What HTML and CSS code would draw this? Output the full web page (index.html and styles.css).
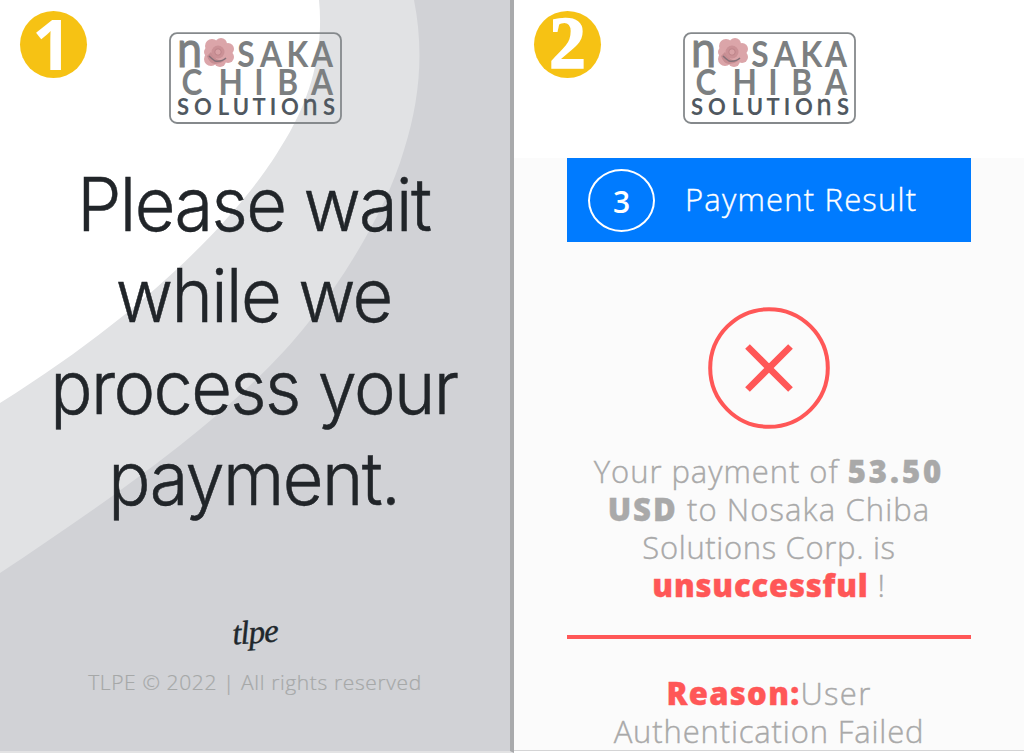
FILE: index.html
```html
<!DOCTYPE html>
<html lang="en">
<head>
  <meta charset="UTF-8">
  <title>Payment Result</title>
  <link rel="stylesheet" href="styles.css">
</head>
<body>
  <div class="screens">
    <section class="screen wait">
      <svg class="swoosh" viewBox="0 0 510 750">
        <path fill="#e1e2e4" d="M0 0H414C424 50 420 100 404 150C388 205 350 270 308 323C240 410 110 500 0 573Z"/>
        <path fill="#fff" d="M0 0H319C323 40 317 92 279 150C249 200 165 300 0 403Z"/>
      </svg>
      <div class="badge one">1</div>
      <svg class="logo" viewBox="0 0 173 92">
        <rect x="1" y="1.2" width="171" height="89.8" rx="7" fill="none" stroke="#85898c" stroke-width="1.8"/>
        <g class="logo-big" text-anchor="middle">
          <text class="logo-n" transform="translate(20.5 34.5) scale(.9 1)">n</text>
          <text transform="scale(.88 1)" y="34.5" x="87.5 115.9 146 174">SAKA</text>
          <text transform="scale(.88 1)" y="63" x="26 70 102.3 135 174">CHIBA</text>
        </g>
        <g class="logo-small" text-anchor="middle">
          <text y="82.7" x="14 34 54.5 72 90 104 121">SOLUTIO</text>
          <text class="logo-n2" transform="translate(141 82.7) scale(.9 1)">n</text>
          <text x="160" y="82.7">S</text>
        </g>
        <g fill="#dba5a9">
          <circle cx="43" cy="14" r="7"/><circle cx="52" cy="12" r="6"/><circle cx="59" cy="17" r="6"/>
          <circle cx="59" cy="25" r="6"/><circle cx="51" cy="29" r="6"/><circle cx="42" cy="27" r="7"/>
          <circle cx="40" cy="20" r="5"/><circle cx="50" cy="20" r="9"/>
        </g>
        <path d="M38 24q2 7 8 8 5 0 9-3-9 0-13-9z" fill="#c68d92"/>
        <circle cx="49" cy="20" r="6.5" fill="#cb9196"/>
        <circle cx="49" cy="20" r="3.2" fill="#d8a1a5" stroke="#b77e84" stroke-width=".8"/>
        <path d="M40 24q3 3 6 5 7 1 11-3" fill="none" stroke="#857078" stroke-width="1.5"/>
      </svg>
      <h1>
        <span class="w1">Please wait</span>
        <span class="w2">while we</span>
        <span class="w3">process your</span>
        <span class="w4">payment.</span>
      </h1>
      <footer>
        <div class="sign">tlpe</div>
        <p>TLPE © 2022 | All rights reserved</p>
      </footer>
    </section>

    <section class="screen result">
      <div class="badge two">2</div>
      <header>
        <svg class="logo" viewBox="0 0 173 92">
          <rect x="1" y="1.2" width="171" height="89.8" rx="7" fill="none" stroke="#85898c" stroke-width="1.8"/>
          <g class="logo-big" text-anchor="middle">
            <text class="logo-n" transform="translate(20.5 34.5) scale(.9 1)">n</text>
            <text transform="scale(.88 1)" y="34.5" x="87.5 115.9 146 174">SAKA</text>
            <text transform="scale(.88 1)" y="63" x="26 70 102.3 135 174">CHIBA</text>
          </g>
          <g class="logo-small" text-anchor="middle">
            <text y="82.7" x="14 34 54.5 72 90 104 121">SOLUTIO</text>
            <text class="logo-n2" transform="translate(141 82.7) scale(.9 1)">n</text>
            <text x="160" y="82.7">S</text>
          </g>
          <g fill="#dba5a9">
            <circle cx="43" cy="14" r="7"/><circle cx="52" cy="12" r="6"/><circle cx="59" cy="17" r="6"/>
            <circle cx="59" cy="25" r="6"/><circle cx="51" cy="29" r="6"/><circle cx="42" cy="27" r="7"/>
            <circle cx="40" cy="20" r="5"/><circle cx="50" cy="20" r="9"/>
          </g>
          <path d="M38 24q2 7 8 8 5 0 9-3-9 0-13-9z" fill="#c68d92"/>
          <circle cx="49" cy="20" r="6.5" fill="#cb9196"/>
          <circle cx="49" cy="20" r="3.2" fill="#d8a1a5" stroke="#b77e84" stroke-width=".8"/>
          <path d="M40 24q3 3 6 5 7 1 11-3" fill="none" stroke="#857078" stroke-width="1.5"/>
        </svg>
      </header>
      <main>
        <div class="step">
          <span class="num">3</span>
          <span class="title">Payment Result</span>
        </div>
        <svg class="cross" viewBox="0 0 122 122" fill="none" stroke="#ff5757">
          <circle cx="61" cy="61" r="58.8" stroke-width="4"/>
          <path d="M39.5 39.5L82.5 82.5M82.5 39.5L39.5 82.5" stroke-width="6.6"/>
        </svg>
        <p class="msg">
          <span class="m1">Your payment of <b>53.50</b></span>
          <span class="m2"><b>USD</b> to Nosaka Chiba</span>
          <span class="m3">Solutions Corp. is</span>
          <span class="m4"><b class="red">unsuccessful</b> !</span>
        </p>
        <hr>
        <p class="msg">
          <span class="m5"><b class="red">Reason:</b>User</span>
          <span class="m6">Authentication Failed</span>
        </p>
      </main>
    </section>
  </div>
</body>
</html>
```
FILE: styles.css
```css
* {
  box-sizing: border-box;
}
body {
  margin: 0;
  height: 753px;
  overflow: hidden;
  background: #fff;
  font-family: "Open Sans", "Noto Sans", sans-serif;
}
.screens {
  display: grid;
  grid-template-columns: 514px 510px;
  height: 753px;
}
.screen {
  position: relative;
  display: flex;
  flex-direction: column;
  align-items: center;
  height: 751px;
  border-bottom: 1px solid #d4d4d5;
}
.wait {
  height: 753px;
  border-right: 4px solid #a9aaac;
  border-bottom: 2px solid #e3e3e4;
  background: #d1d2d6;
  padding-top: 32px;
}
.swoosh {
  position: absolute;
  left: 0;
  top: 0;
  width: 510px;
  height: 750px;
}
.badge {
  position: absolute;
  left: 20px;
  top: 10.5px;
  width: 67px;
  height: 67px;
  border-radius: 50%;
  background: #f6c214;
  color: #fff;
  text-align: center;
}
.one {
  padding-right: 3px;
  font: 700 70px/65px "Open Sans", sans-serif;
}
.two {
  font: bold 74px/65px "Liberation Serif", serif;
  -webkit-text-stroke: 1.5px #fff;
}
.logo {
  position: relative;
  overflow: visible;
  width: 173px;
  height: 92px;
}
.logo-big {
  font: bold 36px Lato, sans-serif;
  fill: #7c7f81;
}
.logo-n {
  font-size: 50px;
  font-weight: 400;
  stroke: #7c7f81;
  stroke-width: 1px;
}
.logo-small {
  font: bold 22px Lato, sans-serif;
  fill: #505860;
}
.logo-n2 {
  font-size: 30px;
  font-weight: 400;
  stroke: #505860;
  stroke-width: .5px;
}
h1 {
  position: relative;
  margin: 35px 0 0;
  color: #212529;
  font: 350 74px/91.3px Inter, sans-serif;
  letter-spacing: -1.7px;
  text-align: center;
  transform: translateX(-1.5px) scaleX(.95);
  -webkit-text-stroke: .5px #212529;
}
h1 span, .msg span {
  display: block;
  white-space: nowrap;
}
footer {
  position: relative;
  margin-top: 85px;
  text-align: center;
}
.sign {
  height: 46px;
  color: #20272c;
  font: italic 400 33px/46px "Liberation Serif", serif;
  letter-spacing: -1px;
  transform: rotate(-4deg);
  -webkit-text-stroke: .4px #20272c;
}
footer p {
  margin: 12px 0 0;
  color: #a6a8a8;
  font-size: 21px;
  font-weight: 300;
  letter-spacing: .62px;
  line-height: 30px;
  white-space: nowrap;
  -webkit-text-stroke: .2px #a6a8a8;
}
.result header {
  height: 158.5px;
  padding-top: 32px;
}
.result main {
  display: flex;
  flex-direction: column;
  align-items: center;
  width: 100%;
  flex: 1;
  background: #fbfbfb;
}
.step {
  display: flex;
  align-items: center;
  width: 404px;
  height: 84px;
  padding-left: 21px;
  background: #007bff;
  color: #fff;
}
.num {
  width: 67px;
  height: 63px;
  border: 2.5px solid #fff;
  border-radius: 50%;
  font: 600 30px/61px "Open Sans", sans-serif;
  text-align: center;
}
.title {
  margin: -2px 0 0 30px;
  font-size: 31px;
  font-weight: 300;
  letter-spacing: 1.2px;
  -webkit-text-stroke: .4px #fff;
}
.cross {
  width: 122px;
  height: 122px;
  margin: 65px 0 23px;
}
.msg {
  margin: 0;
  color: #a9a9a9;
  font-size: 31px;
  font-weight: 300;
  line-height: 38px;
  text-align: center;
  -webkit-text-stroke: .4px;
}
.msg b {
  font-weight: 800;
}
.msg .red {
  color: #ff5757;
}
.m1 { letter-spacing: .95px; }
.m1 b { letter-spacing: 3px; }
.m2 { letter-spacing: 1.1px; }
.m2 b { letter-spacing: 2px; }
.m3 { letter-spacing: .65px; }
.m4 { letter-spacing: .8px; }
.m5 { letter-spacing: 1.3px; }
.m6 { letter-spacing: .85px; }
hr {
  width: 404px;
  height: 4px;
  margin: 31px 0 35px;
  border: 0;
  background: #ff5757;
}
```
